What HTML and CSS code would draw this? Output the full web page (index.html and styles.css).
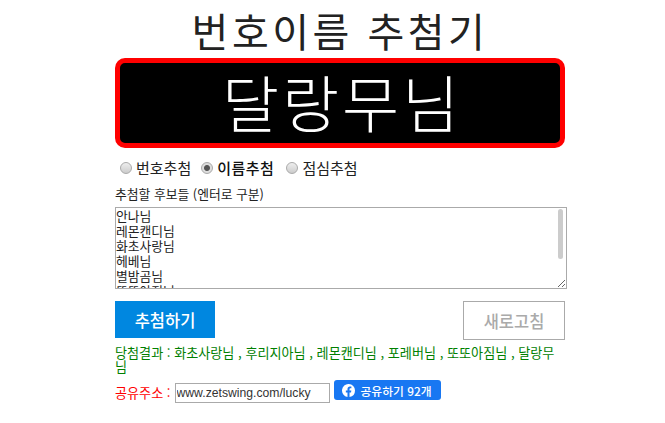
FILE: index.html
```html
<!DOCTYPE html>
<html lang="ko">
<head>
  <meta charset="UTF-8" />
  <title>번호이름 추첨기</title>
  <link rel="stylesheet" href="styles.css">
</head>
<body>
  <div class="wrap">
    <h1>번호이름 추첨기</h1>
    <div class="screen">달랑무님</div>

    <div class="modes">
      <label><input type="radio" name="mode"> 번호추첨</label>
      <label class="on"><input type="radio" name="mode" checked> 이름추첨</label>
      <label><input type="radio" name="mode"> 점심추첨</label>
    </div>

    <div class="hint">추첨할 후보들 (엔터로 구분)</div>
    <div class="names-box">
      <textarea class="names">안나님
레몬캔디님
화초사랑님
헤베님
별밤곰님
또또아짐님
후리지아님
포레버님
달랑무님</textarea>
      <span class="thumb"></span>
    </div>

    <div class="buttons">
      <button class="draw">추첨하기</button>
      <button class="reset">새로고침</button>
    </div>

    <p class="result">당첨결과 : 화초사랑님 , 후리지아님 , 레몬캔디님 , 포레버님 , 또또아짐님 , 달랑무님</p>

    <div class="share">
      <span class="share-label">공유주소 :</span>
      <input class="share-url" type="text" value="www.zetswing.com/lucky">
      <a class="fb" href="#">
        <svg viewBox="0 0 16 16" width="13" height="13"><path fill="#fff" d="M16 8a8 8 0 1 0-9.25 7.9v-5.59H4.72V8h2.03V6.24c0-2 1.19-3.11 3.02-3.11.88 0 1.79.16 1.79.16v1.97h-1.01c-.99 0-1.3.62-1.3 1.25V8h2.22l-.36 2.31H9.25v5.59A8 8 0 0 0 16 8z"/></svg>
        공유하기 92개
      </a>
    </div>
  </div>
</body>
</html>
```

FILE: styles.css
```css
* {
  box-sizing: border-box;
}

body {
  margin: 0;
  background: #fff;
  color: #222;
  font-family: "Noto Sans CJK KR", "Noto Sans", sans-serif;
}

.wrap {
  width: 450px;
  margin-left: 115px;
}

h1 {
  margin: 0;
  height: 58px;
  font-size: 40px;
  font-weight: 400;
  letter-spacing: 3.5px;
  line-height: 60px;
  text-align: center;
  color: #222;
  white-space: nowrap;
}

.screen {
  height: 90px;
  padding-left: 4px;
  background: #000;
  border: 5px solid #f00;
  border-radius: 10px;
  color: #fff;
  font-size: 62px;
  font-weight: 300;
  letter-spacing: 3px;
  line-height: 76px;
  text-align: center;
}

.modes {
  display: flex;
  gap: 10px;
  height: 20px;
  margin-top: 10px;
  padding-left: 5px;
  font-size: 15px;
  line-height: 20px;
}

.modes label {
  display: flex;
  align-items: center;
  gap: 4px;
}

.modes input {
  appearance: none;
  width: 12px;
  height: 12px;
  margin: 0;
  border: 1px solid #aaa;
  border-radius: 50%;
  background: linear-gradient(#eee, #ccc);
}

.modes input:checked {
  background: radial-gradient(circle, #555 0, #555 2.5px, #ddd 3.5px);
}

.modes .on {
  margin-right: 2px;
  color: #111;
  font-weight: 500;
  letter-spacing: 0.5px;
}

.hint {
  margin-top: 8px;
  font-size: 12.8px;
  line-height: 16px;
  height: 20px;
}

.names-box {
  position: relative;
  width: 452px;
  margin-top: 1px;
}

.names {
  display: block;
  width: 452px;
  height: 82px;
  padding: 0;
  border: 1px solid #aaa;
  font-family: inherit;
  font-size: 12.8px;
  line-height: 15px;
  color: #222;
  overflow: hidden;
}

.thumb {
  position: absolute;
  top: 2px;
  right: 4px;
  width: 5px;
  height: 50px;
  background: #ccc;
  border-radius: 3px;
}

.buttons {
  display: flex;
  justify-content: space-between;
  align-items: flex-start;
  margin-top: 12px;
}

.buttons button {
  font-family: inherit;
  font-size: 16.5px;
  font-weight: 500;
  cursor: pointer;
}

.draw {
  width: 100px;
  height: 37px;
  background: #0087e0;
  color: #fff;
  border: none;
}

.reset {
  width: 102px;
  height: 39px;
  background: #fff;
  color: #aaa;
  border: 1px solid #aaa;
}

.result {
  margin: 6px 0 0;
  font-size: 13.1px;
  line-height: 14px;
  color: #008000;
}

.share {
  display: flex;
  align-items: flex-start;
  margin-top: 6px;
}

.share-label {
  margin-top: 5px;
  font-size: 13.1px;
  line-height: 16px;
  color: #f00;
}

.share-url {
  width: 155px;
  height: 20px;
  margin: 3px 4px 0 4px;
  padding: 1px;
  border: 1px solid #aaa;
  font-family: "Liberation Sans", sans-serif;
  font-size: 12.2px;
  color: #333;
}

.fb {
  display: flex;
  align-items: center;
  gap: 6px;
  height: 20px;
  padding: 0 0 0 8px;
  width: 107px;
  background: #1877f2;
  border-radius: 3px;
  color: #fff;
  font-size: 11.8px;
  font-weight: 500;
  text-decoration: none;
  white-space: nowrap;
}
```
